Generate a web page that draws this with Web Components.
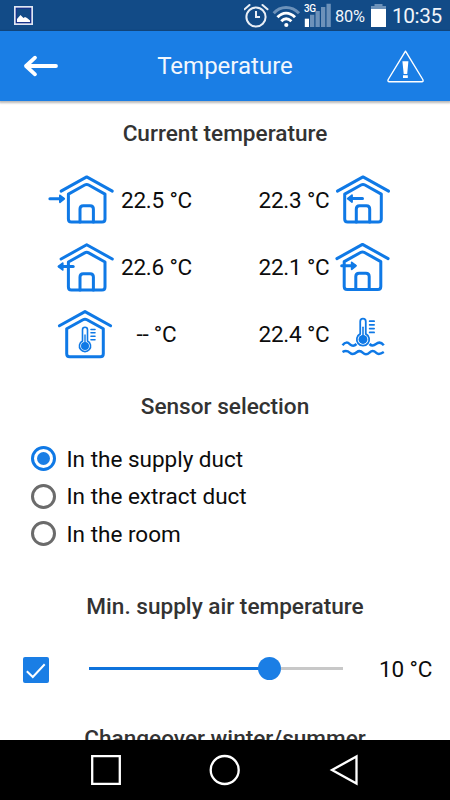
<!DOCTYPE html>
<html lang="en">
<head>
<meta charset="UTF-8">
<meta name="viewport" content="width=device-width, initial-scale=1.0">
<title>Temperature</title>
<style>
  body {
    margin: 0;
    font-family: Roboto, sans-serif;
    font-size: 22.5px;
    color: #0c0c0c;
    background: #fff;
    --primary: #1a7ee5;
    --icon: #0f79e6;
  }
</style>
</head>
<body>
<temp-app></temp-app>

<script>
class StatusBar extends HTMLElement {
  constructor() {
    super();
    this.attachShadow({ mode: 'open' });
  }

  static get styles() {
    return /* css */`
    :host {
      display: flex;
      align-items: center;
      height: 31px;
      flex: none;
      padding-left: 14px;
      padding-right: 8px;
      background: #124b87;
      color: #f1f5fa;
    }
    svg { display: block; flex: none; }
    .icons { margin-left: auto; }
    .percent { width: 31px; font-size: 16.4px; line-height: 31px; margin-left: 11px; padding-top: 2px; letter-spacing: -.2px; }
    .clock { width: 50px; font-size: 20.8px; line-height: 31px; margin-left: 5px; letter-spacing: -.4px; padding-top: 2px; }
    .battery { margin-left: 4px; }
    .signal { width: 18px; height: 31px; margin-left: 3px; }
    `;
  }

  connectedCallback() {
    this.shadowRoot.innerHTML = /* html */`
    <style>${StatusBar.styles}</style>
    <svg width="19" height="31" viewBox="0 0 19 31">
      <rect x="0" y="6" width="19" height="19" fill="#dfe6f2"/>
      <rect x="2.2" y="8.2" width="14.6" height="14.6" fill="#124b87" stroke="#0b1e85" stroke-width="1"/>
      <path d="M3 22V19l3.5-4 3 3 1.5-1 2 1 3 2.5V22z" fill="#fff"/>
    </svg>
    <svg class="icons" width="26" height="31" viewBox="0 0 26 31" fill="none" stroke="#e9eff6" stroke-linecap="round">
      <circle cx="12" cy="17" r="9.6" stroke-width="2"/>
      <path d="M12 11v6h4" stroke-width="2" stroke-linecap="butt"/>
      <path d="M.5 9.300 5.500 5M23.500 9.300 18.500 5" stroke-width="2"/>
    </svg>
    <svg width="33" height="31" viewBox="1 0 33 31" fill="none" stroke-width="3">
      <path d="M4.700 13.300C11.500 5.500 22.500 5.500 30 13.300" stroke="#6d92ba"/>
      <path d="M8.500 17.300C13.500 11.700 20.500 11.700 26 17.300M12.300 21.200C15.200 18.100 19 18.100 22.400 21.200" stroke="#fff" stroke-width="2.900"/>
      <circle cx="17.300" cy="25" r="2.100" fill="#fff"/>
    </svg>
    <svg class="signal" viewBox="0 0 18 31" overflow="visible">
      <g fill="#6d92ba">
        <path d="M4 14.700h4.300V27H4zM9.500 11h4.300V27H9.500zM15 7h4.300V27H15zM20.500 3.700h4.300V27H20.500z"/>
      </g>
      <path d="M-1.200 18.700h4.200V27h-4.200z" fill="#fff"/>
      <text x="-2" y="12" font-size="10" font-weight="500" letter-spacing="-.5" fill="#fff">3G</text>
    </svg>
    <span class="percent">80%</span>
    <svg class="battery" width="17" height="31" viewBox="0 0 17 31">
      <path d="M4.500 4h8v2H16v4H1V6h3.500z" fill="#6d92ba"/>
      <path d="M1 9h15v18H1z" fill="#fff"/>
    </svg>
    <span class="clock">10:35</span>`;
  }
}

class AppHeader extends HTMLElement {
  constructor() {
    super();
    this.attachShadow({ mode: 'open' });
  }

  static get styles() {
    return /* css */`
    :host {
      display: grid;
      grid-template-columns: 66px 1fr 66px;
      align-items: center;
      height: 70px;
      flex: none;
      background: var(--primary);
      color: #f2f7fd;
      box-shadow: 0 1px 2px 1px rgba(0, 0, 0, .28);
      z-index: 1;
    }
    svg { display: block; }
    .title { text-align: center; font-size: 24px; }
    `;
  }

  connectedCallback() {
    this.shadowRoot.innerHTML = /* html */`
    <style>${AppHeader.styles}</style>
    <svg width="66" height="70" viewBox="0 0 66 70" fill="none" stroke="#fff" stroke-width="3.800" stroke-linecap="round" stroke-linejoin="round">
      <path d="M56 35H26M35 26.700 26 35l9 8.300"/>
    </svg>
    <span class="title"><slot></slot></span>
    <svg width="66" height="70" viewBox="0 0 66 70">
      <path d="M21.500 20.200 4.200 48.500Q3.300 50.600 5.400 50.700H37.800Q39.800 50.600 38.800 48.500Z" fill="none" stroke="#fff" stroke-width="1.400" stroke-linejoin="round"/>
      <path d="M18.400 30.300h6L23.200 43h-3.500zM19 44.200h4.800v2.800H19z" fill="#fff"/>
    </svg>`;
  }
}

class SectionTitle extends HTMLElement {
  constructor() {
    super();
    this.attachShadow({ mode: 'open' });
  }

  connectedCallback() {
    this.shadowRoot.innerHTML = /* html */`
    <style>
    :host {
      display: block;
      height: 30px;
      line-height: 32px;
      text-align: center;
      font-weight: 500;
      font-size: 22.600px;
      color: #333;
    }
    </style>
    <slot></slot>`;
  }
}

const arrowRight = (x, y) => `<path d="M${x} ${y}h13" /><path d="M${x + 10} ${y - 3.4}l4.300 3.400-4.300 3.400z" fill="var(--icon)" stroke-width="1.800"/>`;
const arrowLeft = (x, y) => `<path d="M${x + 2} ${y}h13.500" /><path d="M${x + 5} ${y - 3.4}l-4.300 3.400 4.300 3.400z" fill="var(--icon)" stroke-width="1.800"/>`;

const roof = `<path d="M-25.600 15.800 0 1.600 25.600 15.800"/>`;
const walls = `<path d="M-18.300 18.800-2 9.700Q0 8.600 2 9.700L18.300 18.800V43.700Q18.300 46.700 15.300 46.700H-15.300Q-18.300 46.700-18.300 43.700Z"/>`;
const door = `<path d="M-6.700 46.700V33.800Q-6.700 30.500-3.400 30.500H3.400Q6.700 30.500 6.700 33.800V46.700"/>`;
const thermometer = /* html */`
  <path d="M-2.500 31V19.800a2.500 2.500 0 0 1 5 0V31a5.600 5.600 0 1 1-5 0z" stroke-width="1.600"/>
  <circle cy="36" r="4" fill="var(--icon)" stroke="none"/>
  <path d="M0 25v9" stroke-width="1.400"/>
  <path d="M6 19.500h4M6 22.800h4M6 26.200h4M6 29.700h4" stroke-width="1.600"/>`;

const ICONS = {
  outdoor: roof + walls + door + arrowRight(-36.8, 23.5),
  exhaust: roof + walls + door + arrowLeft(-29, 23.3),
  room: roof + walls + thermometer,
  extract: roof + walls + door + arrowLeft(-16, 23.3),
  supply: roof + walls + door + arrowRight(-20.8, 23),
  water: /* html */`
    <g transform="translate(0 -10.500) scale(1.110)">${thermometer}</g>
    <path stroke-linecap="butt" d="M-20.500 35.300C-17.500 31.800-15.500 32-13 34.300S-8.500 36-6.500 34M6.500 34C8.500 36 10.500 36 13 34S18.500 32.500 20.800 35.300M-20.500 42C-17.500 40.300-15.500 40.700-13 42.900S-8.300 44-6.300 42.300-2 41 0 42.900 4.800 44.200 6.800 42.300 11.300 41 13.300 42.900 17.500 44.200 20.800 42" stroke-width="2.500"/>`
};

class TempReading extends HTMLElement {
  constructor() {
    super();
    this.attachShadow({ mode: 'open' });
  }

  static get styles() {
    return /* css */`
    :host {
      display: flex;
      align-items: center;
      height: 67px;
      padding-left: 48px;
    }
    :host([reverse]) { flex-direction: row-reverse; justify-content: flex-end; padding-left: 33px; }
    svg { display: block; flex: none; overflow: visible; }
    .value { width: 72px; margin-left: 4.500px; text-align: center; white-space: nowrap; letter-spacing: -.2px; }
    :host([reverse]) .value { margin: 0; }
    `;
  }

  connectedCallback() {
    const reverse = this.hasAttribute('reverse');
    const x = Number(this.getAttribute('center')) || (reverse ? 33 : 38.700);
    const y = Number(this.getAttribute('top')) || 9.3;
    this.shadowRoot.innerHTML = /* html */`
    <style>${TempReading.styles}</style>
    <svg width="${reverse ? 60 : 68}" height="67" fill="none" stroke="var(--icon)" stroke-width="3" stroke-linecap="round" stroke-linejoin="round">
      <g transform="translate(${x} ${y})">${ICONS[this.getAttribute('icon')]}</g>
    </svg>
    <span class="value"><slot></slot></span>`;
  }
}

class RadioOption extends HTMLElement {
  constructor() {
    super();
    this.attachShadow({ mode: 'open' });
  }

  static get styles() {
    return /* css */`
    :host {
      display: flex;
      align-items: center;
      height: 37.500px;
      padding-left: 31px;
      gap: 10.500px;
    }
    .ring {
      display: grid;
      place-items: center;
      box-sizing: border-box;
      width: 25px;
      height: 25px;
      border: 3px solid #6b6b6b;
      border-radius: 50%;
    }
    :host([checked]) .ring { border-color: var(--icon); }
    :host([checked]) .ring::after {
      content: '';
      width: 13px;
      height: 13px;
      border-radius: 50%;
      background: var(--primary);
    }
    `;
  }

  connectedCallback() {
    this.shadowRoot.innerHTML = /* html */`
    <style>${RadioOption.styles}</style>
    <span class="ring"></span>
    <span><slot></slot></span>`;
  }
}

class TempSlider extends HTMLElement {
  constructor() {
    super();
    this.attachShadow({ mode: 'open' });
  }

  static get styles() {
    return /* css */`
    :host {
      display: flex;
      align-items: center;
      height: 40px;
      padding-left: 23px;
    }
    svg { display: block; flex: none; margin-top: 2px; }
    .track { display: flex; align-items: center; width: 254px; margin-left: 40px; }
    .done { width: 170px; height: 2.500px; background: #0f73dc; }
    .knob { width: 23px; height: 23px; border-radius: 50%; background: var(--primary); margin-left: -1px; }
    .left { flex: 1; height: 2.500px; background: #c8c8c8; }
    .value { margin-left: 36px; white-space: nowrap; letter-spacing: -.15px; }
    `;
  }

  connectedCallback() {
    this.shadowRoot.innerHTML = /* html */`
    <style>${TempSlider.styles}</style>
    <svg width="26" height="26" viewBox="0 0 26 26">
      <rect width="26" height="26" rx="2" fill="var(--primary)"/>
      <path d="M3.800 14.200 9.800 20 21.700 7.300" fill="none" stroke="#fff" stroke-width="2"/>
    </svg>
    <div class="track"><div class="done"></div><div class="knob"></div><div class="left"></div></div>
    <span class="value"><slot></slot></span>`;
  }
}

class NavBar extends HTMLElement {
  constructor() {
    super();
    this.attachShadow({ mode: 'open' });
  }

  connectedCallback() {
    this.shadowRoot.innerHTML = /* html */`
    <style>
    :host {
      display: flex;
      align-items: center;
      justify-content: center;
      gap: 87px;
      height: 60px;
      flex: none;
      background: #000;
    }
    svg { display: block; }
    </style>
    <svg width="32" height="32" fill="none" stroke="#fff" stroke-width="2.300"><path d="M2.200 2.200H29.800V29.800H2.200Z"/></svg>
    <svg width="32" height="32" fill="none" stroke="#fff" stroke-width="2.300"><circle cx="15.700" cy="16" r="14"/></svg>
    <svg width="32" height="32" fill="none" stroke="#fff" stroke-width="2.300"><path d="M28.500 2.500V29.500L4 16Z"/></svg>`;
  }
}

class TempApp extends HTMLElement {
  constructor() {
    super();
    this.attachShadow({ mode: 'open' });
  }

  static get styles() {
    return /* css */`
    :host {
      display: flex;
      flex-direction: column;
      width: 450px;
      height: 800px;
      overflow: hidden;
    }
    main { flex: 1; min-height: 0; overflow: hidden; padding-top: 17px; }
    .readings { display: grid; grid-template-columns: 225px 225px; padding-top: 18px; }
    .sensors { margin: 19px 0 38px; }
    temp-slider { margin: 28px 0 34px; }
    `;
  }

  connectedCallback() {
    this.shadowRoot.innerHTML = /* html */`
    <style>${TempApp.styles}</style>
    <status-bar></status-bar>
    <app-header>Temperature</app-header>
    <main>
      <section-title>Current temperature</section-title>
      <div class="readings">
        <temp-reading icon="outdoor">22.5 °C</temp-reading>
        <temp-reading icon="extract" reverse>22.3 °C</temp-reading>
        <temp-reading icon="exhaust" top="10.2">22.6 °C</temp-reading>
        <temp-reading icon="supply" center="32.5" top="9.8" reverse>22.1 °C</temp-reading>
        <temp-reading icon="room" center="37" top="10">-- °C</temp-reading>
        <temp-reading icon="water" center="33" top="10" reverse>22.4 °C</temp-reading>
      </div>
      <section-title style="margin-top: 24px">Sensor selection</section-title>
      <div class="sensors">
        <radio-option checked>In the supply duct</radio-option>
        <radio-option>In the extract duct</radio-option>
        <radio-option>In the room</radio-option>
      </div>
      <section-title>Min. supply air temperature</section-title>
      <temp-slider>10 °C</temp-slider>
      <section-title>Changeover winter/summer</section-title>
    </main>
    <nav-bar></nav-bar>`;
  }
}

customElements.define('status-bar', StatusBar);
customElements.define('app-header', AppHeader);
customElements.define('section-title', SectionTitle);
customElements.define('temp-reading', TempReading);
customElements.define('radio-option', RadioOption);
customElements.define('temp-slider', TempSlider);
customElements.define('nav-bar', NavBar);
customElements.define('temp-app', TempApp);
</script>
</body>
</html>
